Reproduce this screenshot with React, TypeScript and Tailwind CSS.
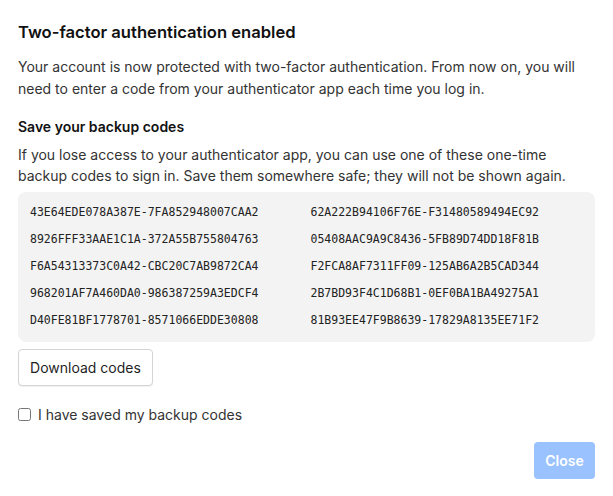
const codes = [
  ['43E64EDE078A387E-7FA852948007CAA2', '62A222B94106F76E-F31480589494EC92'],
  ['8926FFF33AAE1C1A-372A55B755804763', '05408AAC9A9C8436-5FB89D74DD18F81B'],
  ['F6A54313373C0A42-CBC20C7AB9872CA4', 'F2FCA8AF7311FF09-125AB6A2B5CAD344'],
  ['968201AF7A460DA0-986387259A3EDCF4', '2B7BD93F4C1D68B1-0EF0BA1BA49275A1'],
  ['D40FE81BF1778701-8571066EDDE30808', '81B93EE47F9B8639-17829A8135EE71F2'],
];

export default function App() {
  return (
    <div
      className="min-h-[496px] w-full bg-white px-[18px] pt-5 pb-4 flex flex-col text-[#1f1f1f]"
      style={{ fontFamily: 'Inter, "Noto Sans", sans-serif' }}
    >
      <h2 className="text-[16.6px] leading-[25px] font-semibold text-[#111]">Two-factor authentication enabled</h2>
      <p className="mt-[11px] text-[14px] leading-[21.5px] text-[#333]">
        Your account is now protected with two-factor authentication. From now on, you will need to enter a code from
        your authenticator app each time you log in.
      </p>

      <h3 className="mt-[17px] text-[14px] leading-[21px] font-semibold text-[#111]">Save your backup codes</h3>
      <p className="mt-[7px] text-[14px] leading-[21px] text-[#333]">
        If you lose access to your authenticator app, you can use one of these one-time backup codes to sign in. Save
        them somewhere safe; they will not be shown again.
      </p>

      <div
        className="mt-[6px] rounded-lg bg-[#f3f3f3] px-3 pt-3 pb-[14px] grid grid-cols-2 gap-x-2 gap-y-[11px] text-[11.5px] leading-4 text-[#222]"
        style={{ fontFamily: '"DejaVu Sans Mono", "Liberation Mono", monospace' }}
      >
        {codes.map(([a, b]) => (
          <>
            <span key={a}>{a}</span>
            <span key={b}>{b}</span>
          </>
        ))}
      </div>

      <div className="mt-[7px]">
        <button className="h-[37px] w-[135px] rounded border border-[#d4d4d4] bg-white text-[14px] text-[#1f1f1f] shadow-[0_1px_1px_rgba(0,0,0,0.06)]">
          Download codes
        </button>
      </div>

      <label className="mt-[18px] flex items-center gap-[7px] text-[14px] leading-[21px] text-[#333]">
        <input type="checkbox" className="h-[13px] w-[13px] m-0 accent-[#2563eb]" />
        I have saved my backup codes
      </label>

      <div className="mt-[17px] flex justify-end">
        <button className="h-[37px] w-[61px] rounded bg-[#99c2ff] text-[14px] font-semibold text-white">Close</button>
      </div>
    </div>
  );
}
